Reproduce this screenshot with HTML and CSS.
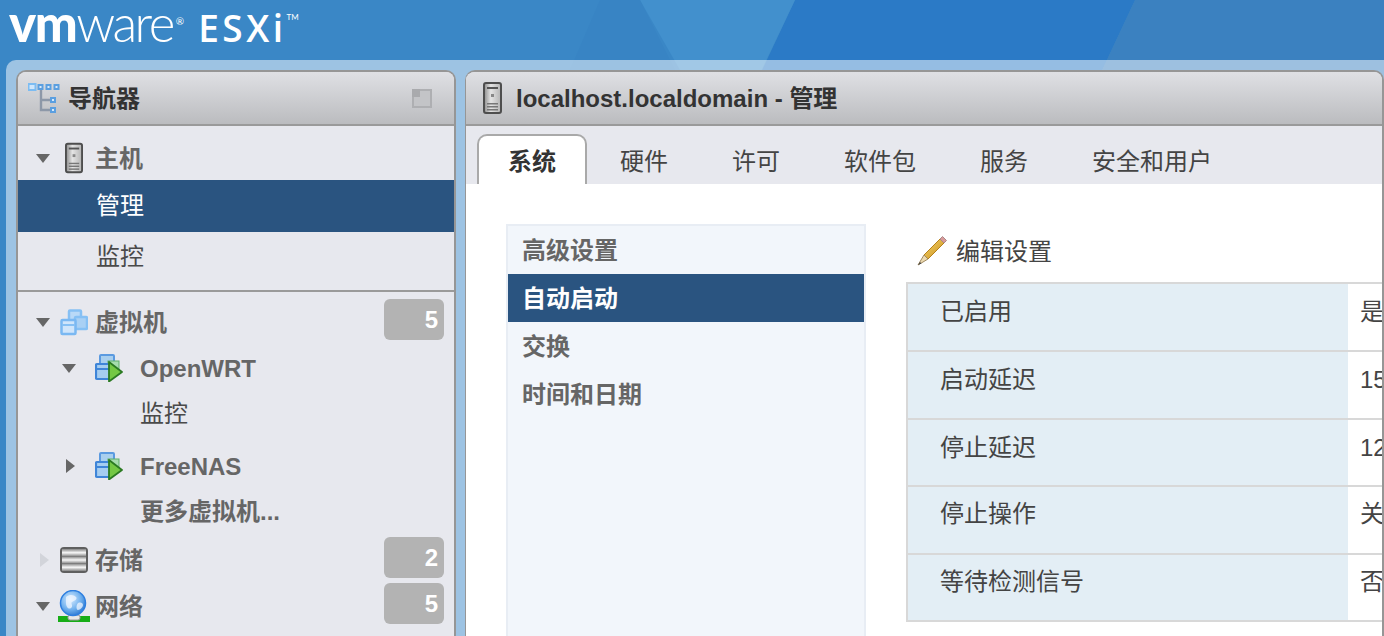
FILE: index.html
```html
<!DOCTYPE html>
<html lang="zh">
<head>
<meta charset="utf-8">
<title>localhost.localdomain - VMware ESXi</title>
<link rel="stylesheet" href="styles.css">
</head>
<body>
<svg class="backdrop" viewBox="0 0 1384 636" preserveAspectRatio="none" aria-hidden="true">
  <rect width="1384" height="636" fill="#3a87c6"/>
  <polygon points="795,0 1135,0 1060,160 720,160" fill="#2b7ac6"/>
  <polygon points="1135,0 1384,0 1384,160 1060,160" fill="#3b81c0"/>
  <polygon points="640,0 795,0 745,105 700,105" fill="#4290cd"/>
  <polygon points="600,0 640,0 675,70 570,70" fill="#3884c4"/>
</svg>
<svg class="defs" aria-hidden="true">
  <defs>
    <linearGradient id="srv" x1="0" x2="1" y1="0" y2="0"><stop offset="0" stop-color="#8c8c8c"/><stop offset=".4" stop-color="#e4e4e4"/><stop offset="1" stop-color="#b4b4b4"/></linearGradient>
    <linearGradient id="disk" x1="0" x2="0" y1="0" y2="1"><stop offset="0" stop-color="#858585"/><stop offset=".5" stop-color="#f8f8f8"/><stop offset="1" stop-color="#858585"/></linearGradient>
    <radialGradient id="globe" cx=".4" cy=".35" r=".7"><stop offset="0" stop-color="#d8ecff"/><stop offset=".6" stop-color="#6fb0ee"/><stop offset="1" stop-color="#2a76d0"/></radialGradient>
    <linearGradient id="pen" x1="0" x2="1" y1="0" y2="1"><stop offset="0" stop-color="#f6d46a"/><stop offset="1" stop-color="#c98f1c"/></linearGradient>
    <symbol id="i-server" viewBox="0 0 19 32">
      <rect x="1" y="1" width="17" height="30" rx="2" fill="url(#srv)" stroke="#4e4e4e" stroke-width="2"/>
      <rect x="4" y="5" width="11" height="2" fill="#555"/>
      <rect x="8" y="12" width="3" height="3" fill="#888"/>
      <rect x="4" y="21" width="11" height="1.5" fill="#777"/>
      <rect x="4" y="24" width="11" height="1.5" fill="#777"/>
      <rect x="4" y="27" width="11" height="1.5" fill="#777"/>
    </symbol>
    <symbol id="i-tree" viewBox="0 0 32 30">
      <path d="M13 6V27H22M13 17H22" fill="none" stroke="#8d98a8" stroke-width="2.4"/>
      <rect x="0.5" y="1" width="7" height="6" fill="#cfe6fb" stroke="#7cbcf2" stroke-width="2"/>
      <rect x="10.5" y="2" width="4" height="4" fill="#d8e9fa" stroke="#5b9fe0" stroke-width="2"/>
      <rect x="18.5" y="2" width="4" height="4" fill="#d8e9fa" stroke="#5b9fe0" stroke-width="2"/>
      <rect x="26.5" y="2" width="4" height="4" fill="#d8e9fa" stroke="#5b9fe0" stroke-width="2"/>
      <rect x="23" y="15" width="4" height="4" fill="#d8e9fa" stroke="#5b9fe0" stroke-width="2"/>
      <rect x="23" y="25" width="4" height="4" fill="#d8e9fa" stroke="#5b9fe0" stroke-width="2"/>
    </symbol>
    <symbol id="i-vms" viewBox="0 0 28 27">
      <rect x="9" y="1.5" width="12" height="11" rx="1" fill="#b9d9f7" stroke="#86c0f4" stroke-width="2.5"/>
      <rect x="15" y="8" width="12" height="12" rx="1" fill="#a9d0f4" stroke="#86c0f4" stroke-width="2.5"/>
      <rect x="1.5" y="11" width="14" height="14" rx="1" fill="#cfe5fb" stroke="#7ab8f2" stroke-width="2.5"/>
      <rect x="2" y="15" width="13" height="2" fill="#86c0f4"/>
    </symbol>
    <symbol id="i-vm" viewBox="0 0 28 28">
      <rect x="5" y="1" width="14" height="11" rx="1" fill="#a9cfee" stroke="#5b9ae0" stroke-width="2"/>
      <rect x="13" y="7" width="11" height="12" fill="#a6dcae" stroke="#5fae6a"/>
      <rect x="1" y="10" width="14" height="15" rx="1" fill="#a5cdf0" stroke="#3f85d8" stroke-width="2.2"/>
      <rect x="2" y="14" width="12" height="2" fill="#3f85d8"/>
      <polygon points="14,8 27,18 14,27.5" fill="#74c844" stroke="#2b7a22" stroke-width="1.8" stroke-linejoin="round"/>
    </symbol>
    <symbol id="i-storage" viewBox="0 0 28 26">
      <rect x="0" y="0" width="28" height="26" rx="4" fill="#5f5f5f"/>
      <rect x="2" y="2" width="24" height="7.4" fill="url(#disk)"/>
      <rect x="2" y="9.4" width="24" height="7.2" fill="url(#disk)"/>
      <rect x="2" y="16.6" width="24" height="7.4" fill="url(#disk)"/>
    </symbol>
    <symbol id="i-net" viewBox="0 0 32 32">
      <rect x="0" y="26" width="32" height="6" fill="#17ad17"/>
      <rect x="10" y="25" width="12" height="5" rx="2" fill="#e8e8e8" stroke="#999"/>
      <circle cx="15" cy="13" r="12.5" fill="url(#globe)" stroke="#2e7fe0" stroke-width="1.5"/>
      <path d="M8 7c4-3 8-2 10 0s-2 4-4 5 2 4-1 6-5-2-5-5zM20 13c3-1 5 0 5 2s-3 5-5 5-2-5 0-7z" fill="#f1f7ff" opacity=".75"/>
    </symbol>
  </defs>
</svg>

<header class="brand">
  <span class="logo-vm">vm</span><span class="logo-ware">ware</span><span class="logo-reg">®</span>
  <span class="logo-esxi">ESXi</span><span class="logo-tm">TM</span>
</header>

<div class="frame">
  <aside class="panel nav-panel">
    <div class="panel-head">
      <svg class="head-tree"><use href="#i-tree"/></svg>
      <h2 class="panel-title">导航器</h2>
      <span class="collapse"></span>
    </div>
    <nav class="nav-body">
      <section class="nav-host">
        <div class="row r44">
          <span class="arrow down"></span>
          <span class="ico"><svg class="s-server"><use href="#i-server"/></svg></span>
          <span class="label strong">主机</span>
        </div>
        <div class="row leaf tall selected">管理</div>
        <div class="row leaf mid">监控</div>
      </section>
      <section class="nav-items">
        <div class="row">
          <span class="arrow down"></span>
          <span class="ico"><svg class="s-vms"><use href="#i-vms"/></svg></span>
          <span class="label strong">虚拟机</span>
          <span class="badge">5</span>
        </div>
        <div class="row sub">
          <span class="arrow down"></span>
          <span class="ico"><svg class="s-vm"><use href="#i-vm"/></svg></span>
          <span class="label strong">OpenWRT</span>
        </div>
        <div class="row leaf2 r45">监控</div>
        <div class="row sub r48">
          <span class="arrow right"></span>
          <span class="ico"><svg class="s-vm"><use href="#i-vm"/></svg></span>
          <span class="label strong">FreeNAS</span>
        </div>
        <div class="row leaf2 r42 strong">更多虚拟机...</div>
        <div class="row r-gap">
          <span class="arrow right faint"></span>
          <span class="ico"><svg class="s-storage"><use href="#i-storage"/></svg></span>
          <span class="label strong">存储</span>
          <span class="badge">2</span>
        </div>
        <div class="row">
          <span class="arrow down"></span>
          <span class="ico"><svg class="s-net"><use href="#i-net"/></svg></span>
          <span class="label strong">网络</span>
          <span class="badge">5</span>
        </div>
      </section>
    </nav>
  </aside>

  <main class="panel main-panel">
    <div class="panel-head">
      <svg class="head-server"><use href="#i-server"/></svg>
      <h2 class="panel-title">localhost.localdomain - 管理</h2>
    </div>
    <div class="tabs">
      <span class="tab active">系统</span>
      <span class="tab">硬件</span>
      <span class="tab">许可</span>
      <span class="tab">软件包</span>
      <span class="tab">服务</span>
      <span class="tab">安全和用户</span>
    </div>
    <div class="content">
      <ul class="side-list">
        <li>高级设置</li>
        <li class="current">自动启动</li>
        <li>交换</li>
        <li>时间和日期</li>
      </ul>
      <div class="settings">
        <div class="toolbar">
          <svg class="pencil" viewBox="0 0 30 30" aria-hidden="true">
            <polygon points="7,19 23,3 27,7 11,23" fill="url(#pen)" stroke="#b5801a"/>
            <polygon points="23,3 25.5,0.5 29.5,4.5 27,7" fill="#d99a9a" stroke="#a88"/>
            <polygon points="7,19 11,23 1,29" fill="#ecd9b0" stroke="#a08a60"/>
            <polygon points="3,26 4.5,27.5 1,29" fill="#444"/>
          </svg>
          <span class="tool-label">编辑设置</span>
        </div>
        <div class="table">
          <div class="tr"><div class="th">已启用</div><div class="td">是</div></div>
          <div class="tr"><div class="th">启动延迟</div><div class="td">15</div></div>
          <div class="tr"><div class="th">停止延迟</div><div class="td">12</div></div>
          <div class="tr"><div class="th">停止操作</div><div class="td">关</div></div>
          <div class="tr"><div class="th">等待检测信号</div><div class="td">否</div></div>
        </div>
      </div>
    </div>
  </main>
</div>
</body>
</html>
```

FILE: styles.css
```css
* { box-sizing: border-box; }
html, body { margin: 0; height: 636px; overflow: hidden; }
body {
  position: relative;
  font-family: "Liberation Sans", "Noto Sans CJK SC", sans-serif;
  font-size: 24px;
  color: #3c3c3c;
}
.backdrop { position: absolute; left: 0; top: 0; width: 1384px; height: 636px; z-index: 0; }
.defs { position: absolute; width: 0; height: 0; }

.brand {
  position: relative;
  z-index: 1;
  height: 60px;
  padding: 2px 0 0 9px;
  display: flex;
  align-items: baseline;
  color: #fff;
  font-family: Lato, "Liberation Sans", sans-serif;
}
.logo-vm { font-size: 51px; font-weight: 900; letter-spacing: -1.5px; line-height: 42px; }
.logo-ware { font-size: 51px; font-weight: 300; letter-spacing: -2.5px; line-height: 42px; }
.logo-reg { font-size: 10px; align-self: flex-start; margin: 13px 0 0 3px; }
.logo-esxi { font-size: 37px; margin-left: 14px; letter-spacing: 3.5px; font-family: "Open Sans", sans-serif; font-weight: 600; line-height: 42px; }
.logo-tm { font-size: 8px; align-self: flex-start; margin: 10px 0 0 0; }

.frame {
  position: relative;
  z-index: 1;
  height: 576px;
  margin-left: 6px;
  padding: 10px 0 0 10px;
  display: flex;
  gap: 9px;
  background: rgba(255, 255, 255, .5);
  border-radius: 10px 0 0 0;
  overflow: hidden;
}

.panel {
  border: 2px solid #969696;
  border-bottom: 0;
  border-radius: 10px 10px 0 0;
  background: #e7e8ee;
  overflow: hidden;
}
.nav-panel { width: 440px; flex: none; }
.main-panel { flex: 1; min-width: 0; border-left-width: 1px; }

.panel-head {
  height: 54px;
  border-bottom: 2px solid #9a9a9a;
  background: linear-gradient(#dfe0e4, #bbbcbf);
  display: flex;
  align-items: center;
}
.panel-title { margin: 2px 0 0; font-size: 24px; font-weight: 700; color: #333; line-height: 1; }
.head-tree { width: 32px; height: 30px; margin: 0 8px 0 10px; }
.head-server { width: 19px; height: 32px; margin: 0 14px 0 17px; }
.collapse {
  position: relative;
  width: 20px;
  height: 19px;
  margin-left: auto;
  margin-right: 22px;
  background: #c3c4c7;
  border: 2px solid #aeafb2;
}
.collapse::before { content: ""; position: absolute; left: -2px; top: -2px; width: 8px; height: 8px; background: #a9aaad; }

.nav-host { padding: 10px 0 10px; border-bottom: 2px solid #9a9a9a; }
.nav-items { padding-top: 7px; }
.row {
  height: 46px;
  display: flex;
  align-items: center;
  padding: 0 10px 0 0;
  color: #666;
}
.arrow { flex: none; width: 0; height: 0; margin-left: 18px; }
.arrow.down { border: 7px solid transparent; border-top: 9px solid #666; border-bottom: 0; }
.arrow.right { border: 7px solid transparent; border-left: 9px solid #666; border-right: 0; margin-left: 48px; }
.arrow.right.faint { border-left-color: #d2d4da; margin-left: 22px; }
.ico { flex: none; width: 32px; display: flex; justify-content: center; margin-left: 8px; margin-right: 5px; }
.arrow.right.faint + .ico { margin-left: 9px; }
.sub .arrow.down { margin-left: 44px; }
.sub .ico { margin-left: 17px; margin-right: 15px; }
.sub .arrow.right + .ico { margin-left: 18px; }
.s-server { width: 18px; height: 32px; }
.s-vms { width: 28px; height: 27px; }
.s-vm { width: 28px; height: 28px; }
.s-storage { width: 28px; height: 26px; }
.s-net { width: 32px; height: 32px; }
.label { line-height: 1; margin-top: 2px; }
.strong { font-weight: 700; }
.leaf { padding-left: 78px; color: #4a4a4a; }
.leaf2 { padding-left: 122px; padding-bottom: 4px; color: #4a4a4a; }
.leaf2.strong { color: #666; }
.r44 { height: 44px; }
.tall { height: 52px; padding-bottom: 6px; }
.mid { height: 48px; padding-bottom: 4px; }
.r45 { height: 45px; }
.r48 { height: 48px; margin-top: 6px; }
.r42 { height: 42px; }
.r-gap { margin-top: 5px; }
.selected { background: #2a5480; color: #fff; }
.badge {
  margin-left: auto;
  margin-bottom: 5px;
  flex: none;
  width: 60px;
  height: 41px;
  padding-right: 6px;
  border-radius: 6px;
  background: #b3b3b3;
  color: #fff;
  font-weight: 700;
  text-align: right;
  line-height: 41px;
}

.tabs { height: 58px; padding: 8px 0 0 11px; display: flex; }
.tab {
  padding: 1px 30px 0;
  border: 2px solid transparent;
  border-bottom: 0;
  line-height: 50px;
  color: #444;
}
.tab.active {
  padding: 1px 29px 0;
  margin-right: 1px;
  border-color: #a9a9a9;
  border-radius: 10px 10px 0 0;
  background: #fff;
  color: #333;
  font-weight: 700;
}

.content { height: 460px; padding: 40px 0 0 40px; display: flex; gap: 40px; background: #fff; }
.side-list {
  flex: none;
  width: 360px;
  margin: 0;
  padding: 0;
  list-style: none;
  border: 2px solid #e8edf4;
  background: #f2f6fb;
  color: #666;
  font-weight: 700;
}
.side-list li { height: 48px; line-height: 50px; padding-left: 14px; }
.side-list .current { background: #2a5480; color: #fff; }

.settings { flex: none; width: 1000px; }
.toolbar { height: 58px; display: flex; align-items: center; padding: 0 0 0 11px; }
.pencil { width: 30px; height: 30px; margin-top: -4px; }
.tool-label { margin: -8px 0 0 9px; color: #444; }
.table { border: 2px solid #d8d8d8; border-right: 0; }
.tr { height: 67.6px; display: flex; border-top: 2px solid #d8d8d8; }
.tr:first-child { height: 66px; border-top: 0; }
.th { flex: none; width: 440px; padding: 10px 0 0 32px; background: #e3eef5; line-height: 34px; color: #444; }
.td { padding: 10px 0 0 12px; line-height: 34px; color: #444; }
.tr:nth-child(-n+3) .th, .tr:nth-child(-n+3) .td { padding-top: 11px; }
```
